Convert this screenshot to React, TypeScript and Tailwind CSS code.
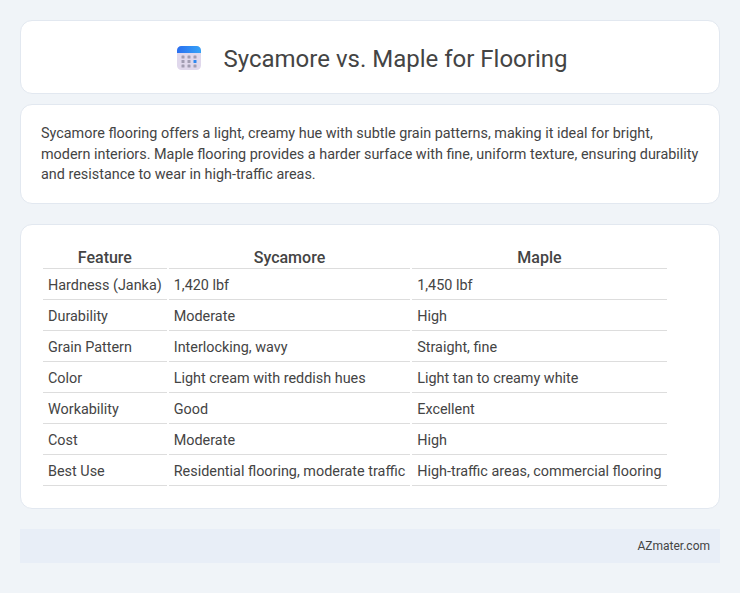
const rows = [
  ['Hardness (Janka)', '1,420 lbf', '1,450 lbf'],
  ['Durability', 'Moderate', 'High'],
  ['Grain Pattern', 'Interlocking, wavy', 'Straight, fine'],
  ['Color', 'Light cream with reddish hues', 'Light tan to creamy white'],
  ['Workability', 'Good', 'Excellent'],
  ['Cost', 'Moderate', 'High'],
  ['Best Use', 'Residential flooring, moderate traffic', 'High-traffic areas, commercial flooring'],
];

function CalendarIcon() {
  return (
    <svg width="24" height="24" viewBox="0 0 24 24" className="mb-0.5">
      <defs>
        <linearGradient id="calTop" x1="0" y1="0" x2="1" y2="0">
          <stop offset="0" stopColor="#2a6ff0" />
          <stop offset="1" stopColor="#36a3f7" />
        </linearGradient>
      </defs>
      <rect x="0" y="0" width="24" height="24" rx="4.5" fill="#e0d8ec" />
      <path d="M0 7V4.5A4.5 4.5 0 0 1 4.500 0h15A4.500 4.500 0 0 1 24 4.500V7z" fill="url(#calTop)" />
      {[5, 11, 17].map((x) =>
        [9.500, 14, 18.500].map((y) => (
          <rect
            key={`${x}-${y}`}
            x={x - 0.5}
            y={y}
            width="3"
            height="3"
            rx="0.5"
            fill={x === 17 && y === 14 ? '#2f88f0' : '#a29db2'}
          />
        )),
      )}
    </svg>
  );
}

export default function App() {
  return (
    <div className="min-h-[593px] bg-[#f0f4f8] p-5 font-['Roboto',sans-serif] text-[#444444]">
      <header className="flex h-[74px] items-center justify-center gap-[23px] rounded-xl border border-[#e2e8f0] bg-white pl-1 pt-1">
        <CalendarIcon />
        <h1 className="text-2xl font-normal text-[#444444]">Sycamore vs. Maple for Flooring</h1>
      </header>

      <section className="mt-2.5 rounded-xl border border-[#e2e8f0] bg-white px-5 pb-[17px] pt-[19px] text-[14.4px] leading-[20.5px]">
        Sycamore flooring offers a light, creamy hue with subtle grain patterns, making it ideal for bright, modern
        interiors. Maple flooring provides a harder surface with fine, uniform texture, ensuring durability and
        resistance to wear in high-traffic areas.
      </section>

      <section className="mt-5 rounded-xl border border-[#e2e8f0] bg-white px-5 pb-5 pt-[20px]">
        <table className="border-separate border-spacing-[2px] text-[14.4px]">
          <thead>
            <tr>
              <th className="border-b border-[#dddddd] px-[5px] text-center text-base font-medium leading-[21px]">Feature</th>
              <th className="border-b border-[#dddddd] px-[5px] text-center text-base font-medium leading-[21px]">Sycamore</th>
              <th className="border-b border-[#dddddd] px-[5px] text-center text-base font-medium leading-[21px]">Maple</th>
            </tr>
          </thead>
          <tbody>
            {rows.map((row) => (
              <tr key={row[0]}>
                {row.map((cell) => (
                  <td key={cell} className="h-[29px] border-b border-[#dddddd] px-[5px] pt-[3px] align-middle leading-[20px]">
                    {cell}
                  </td>
                ))}
              </tr>
            ))}
          </tbody>
        </table>
      </section>

      <footer className="mt-5 flex h-[34px] items-center justify-end bg-[#e8eef7] px-2.5 text-xs text-[#444444]">
        AZmater.com
      </footer>
    </div>
  );
}
